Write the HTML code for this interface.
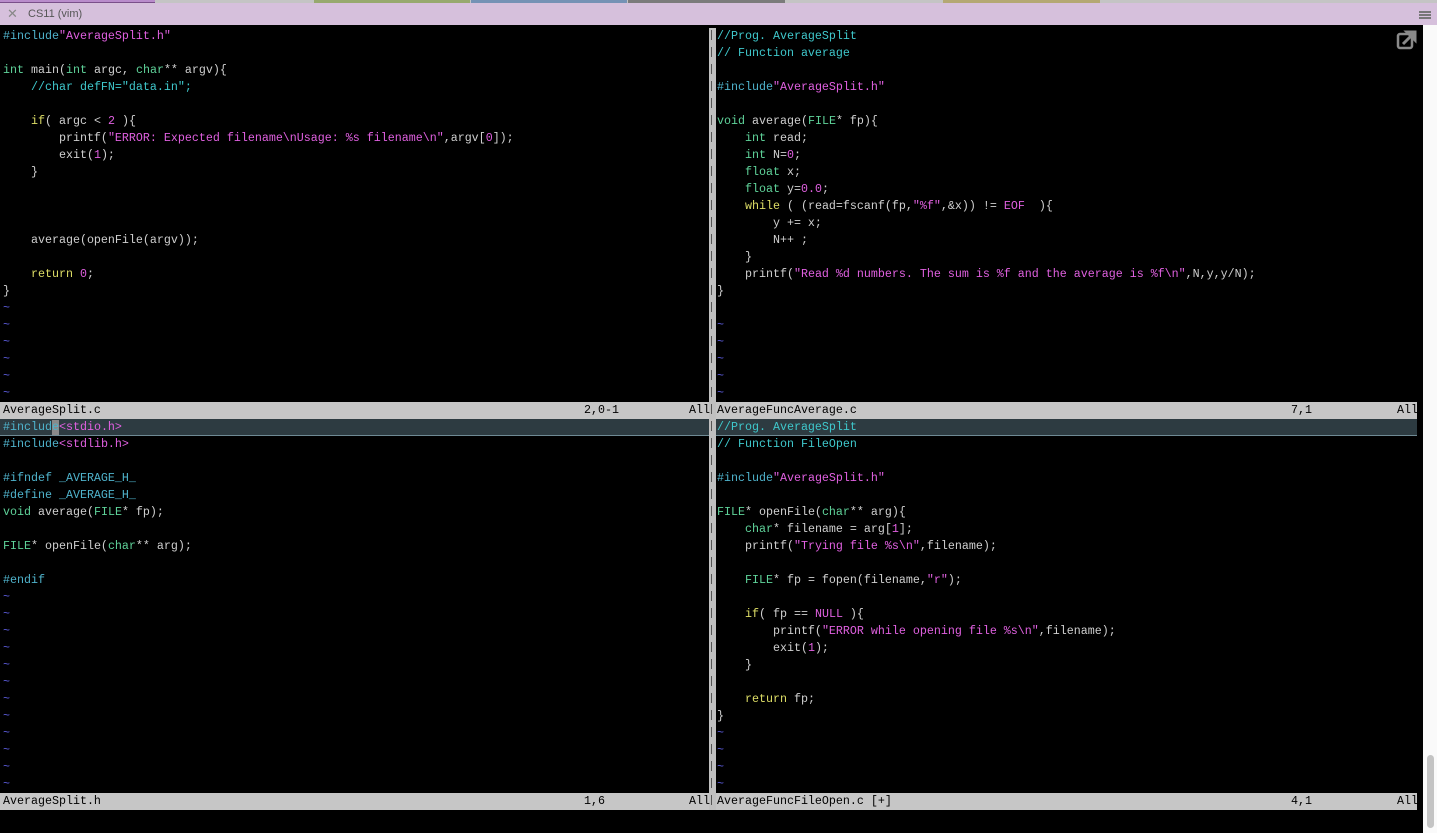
<!DOCTYPE html>
<html><head><meta charset="utf-8"><style>
*{margin:0;padding:0}
body{width:1437px;height:833px;background:#000;position:relative;overflow:hidden;font-family:"Liberation Mono",monospace}
.tabs{position:absolute;top:0;left:0;width:1437px;height:3px;background:#c4c4c4}
.tabs div{position:absolute;top:0;height:3px}
.title{position:absolute;top:3px;left:0;width:1437px;height:22px;background:#d6c0dc;font-family:"Liberation Sans",sans-serif;font-size:11px;color:#555}
pre{position:absolute;font-family:"Liberation Mono",monospace;font-size:11.67px;line-height:17px;color:#cfcfcf;white-space:pre}
.p{color:#4fb3cc}.s{color:#e060e0}.t{color:#5fd39a}.k{color:#dede66}.c{color:#3fc8cc}.n{color:#e060e0}.tl{color:#5a5ad8}
.st{position:absolute;height:17px;background:#c6c6c6;color:#000;font-size:11.67px;line-height:17px;white-space:pre}
.st span{position:absolute;top:0}
</style></head><body>
<div class="tabs">
<div style="left:0;width:155px;background:#b98ccb;border-bottom:1px solid #7a4f8a;height:2px"></div>
<div style="left:314px;width:156px;background:#97a96e"></div>
<div style="left:471px;width:156px;background:#7592b5"></div>
<div style="left:628px;width:157px;background:#7b7b7b"></div>
<div style="left:943px;width:157px;background:#b4a873"></div>
</div>
<div class="title"><span style="position:absolute;left:7px;top:3px;font-size:13px;color:#888">✕</span><span style="position:absolute;left:28px;top:5px">CS11 (vim)</span>
<div style="position:absolute;right:6px;top:8px;width:12px;height:2px;background:#777;box-shadow:0 3px 0 #777,0 6px 0 #777"></div></div>

<div style="position:absolute;left:1423px;top:25px;width:14px;height:808px;background:#fafafa"></div>
<div style="position:absolute;left:1427px;top:755px;width:7px;height:73px;background:#c4c4c4;border-radius:4px"></div>
<svg style="position:absolute;left:1396px;top:29px" width="22" height="22" viewBox="0 0 22 22"><rect x="2" y="5" width="14" height="14" rx="2" fill="none" stroke="#8a8a8a" stroke-width="2.5"/><path d="M7 15 L17 5 M11 3 H19 V11 Z" stroke="#8a8a8a" stroke-width="3" fill="#8a8a8a"/></svg>

<div style="position:absolute;left:709px;top:28px;width:7px;height:782px;background:#c0c0c0"></div>
<div style="position:absolute;left:711px;top:30px;width:1px;height:778px;background:repeating-linear-gradient(#555 0 10px,transparent 10px 17px)"></div>

<pre style="left:3px;top:28px"><span class="p">#include</span><span class="s">"AverageSplit.h"</span>

<span class="t">int</span> main(<span class="t">int</span> argc, <span class="t">char</span>** argv){
    <span class="c">//char defFN="data.in";</span>

    <span class="k">if</span>( argc &lt; <span class="n">2</span> ){
        printf(<span class="s">"ERROR: Expected filename\nUsage: %s filename\n"</span>,argv[<span class="n">0</span>]);
        exit(<span class="n">1</span>);
    }



    average(openFile(argv));

    <span class="k">return</span> <span class="n">0</span>;
}
<span class="tl">~
~
~
~
~
~</span></pre>

<pre style="left:717px;top:28px"><span class="c">//Prog. AverageSplit
// Function average</span>

<span class="p">#include</span><span class="s">"AverageSplit.h"</span>

<span class="t">void</span> average(<span class="t">FILE</span>* fp){
    <span class="t">int</span> read;
    <span class="t">int</span> N=<span class="n">0</span>;
    <span class="t">float</span> x;
    <span class="t">float</span> y=<span class="n">0.0</span>;
    <span class="k">while</span> ( (read=fscanf(fp,<span class="s">"%f"</span>,&amp;x)) != <span class="n">EOF</span>  ){
        y += x;
        N++ ;
    }
    printf(<span class="s">"Read %d numbers. The sum is %f and the average is %f\n"</span>,N,y,y/N);
}

<span class="tl">~
~
~
~
~</span></pre>

<div class="st" style="left:0;top:402px;width:709px"><span style="left:3px">AverageSplit.c</span><span style="left:584px">2,0-1</span><span style="left:689px">All</span></div>
<div class="st" style="left:716px;top:402px;width:701px"><span style="left:1px">AverageFuncAverage.c</span><span style="left:575px">7,1</span><span style="left:681px">All</span></div>

<div style="position:absolute;left:0;top:419px;width:709px;height:16px;background:#2d3b41;border-bottom:1px solid #6f8a94"></div>
<div style="position:absolute;left:716px;top:419px;width:701px;height:16px;background:#2d3b41;border-bottom:1px solid #6f8a94"></div>
<div style="position:absolute;left:52px;top:420px;width:7px;height:15px;background:#8a8a8a"></div>

<pre style="left:3px;top:419px"><span class="p">#include</span><span class="s">&lt;stdio.h&gt;</span>
<span class="p">#include</span><span class="s">&lt;stdlib.h&gt;</span>

<span class="p">#ifndef _AVERAGE_H_
#define _AVERAGE_H_</span>
<span class="t">void</span> average(<span class="t">FILE</span>* fp);

<span class="t">FILE</span>* openFile(<span class="t">char</span>** arg);

<span class="p">#endif</span>
<span class="tl">~
~
~
~
~
~
~
~
~
~
~
~</span></pre>

<pre style="left:717px;top:419px"><span class="c">//Prog. AverageSplit
// Function FileOpen</span>

<span class="p">#include</span><span class="s">"AverageSplit.h"</span>

<span class="t">FILE</span>* openFile(<span class="t">char</span>** arg){
    <span class="t">char</span>* filename = arg[<span class="n">1</span>];
    printf(<span class="s">"Trying file %s\n"</span>,filename);

    <span class="t">FILE</span>* fp = fopen(filename,<span class="s">"r"</span>);

    <span class="k">if</span>( fp == <span class="n">NULL</span> ){
        printf(<span class="s">"ERROR while opening file %s\n"</span>,filename);
        exit(<span class="n">1</span>);
    }

    <span class="k">return</span> fp;
}
<span class="tl">~
~
~
~</span></pre>

<div class="st" style="left:0;top:793px;width:709px"><span style="left:3px">AverageSplit.h</span><span style="left:584px">1,6</span><span style="left:689px">All</span></div>
<div class="st" style="left:716px;top:793px;width:701px"><span style="left:1px">AverageFuncFileOpen.c [+]</span><span style="left:575px">4,1</span><span style="left:681px">All</span></div>
</body></html>
